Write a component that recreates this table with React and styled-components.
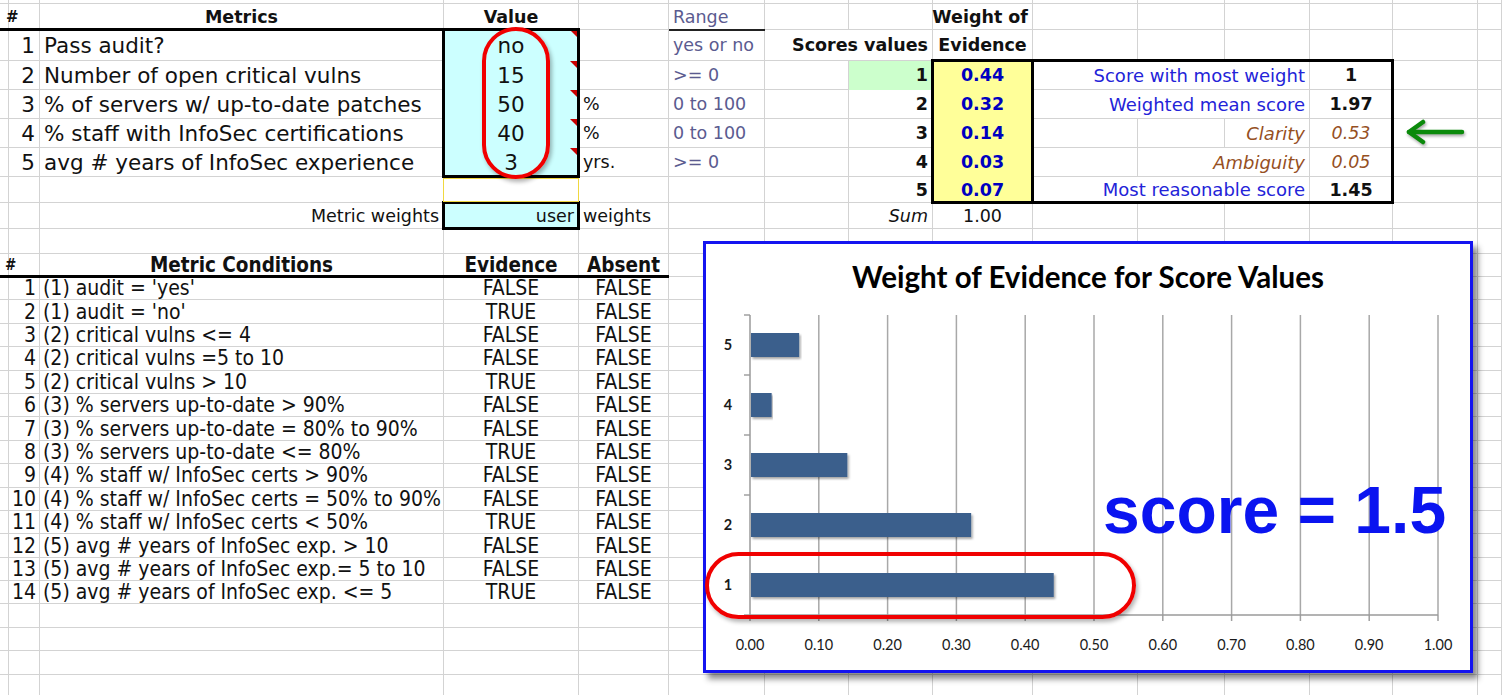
import React from "react";
import styled, { createGlobalStyle, css } from "styled-components";

const COLS = [2, 38, 404, 135, 90, 96, 84, 84, 100, 105, 87, 85, 83, 85, 24];
const ROWS = [4, 26, 31, 29, 29, 29, 29, 26, 26, 25, 23, ...Array(18).fill(23.4)];

const GRID = "#d3d3d3";
const CYAN = "#ccffff";
const YELLOW = "#ffff99";
const GREEN = "#ccffcc";
const RANGE = "#5b5b90";
const BLUE = "#2323d8";
const BROWN = "#96501f";

const GlobalStyle = createGlobalStyle`
  html, body {
    margin: 0;
    padding: 0;
    background: #fff;
    overflow: hidden;
  }
  body {
    font-family: "DejaVu Sans", Verdana, sans-serif;
    color: #111;
  }
`;

const Sheet = styled.div`
  position: relative;
  width: 1502px;
  height: 695px;
  overflow: hidden;
  display: grid;
  grid-template-columns: ${COLS.map((w) => w + "px").join(" ")};
  grid-template-rows: ${ROWS.map((h) => h + "px").join(" ")};
`;

const justify = { left: "flex-start", right: "flex-end", center: "center" };

const Cell = styled.div`
  grid-row: ${(p) => p.$row};
  grid-column: ${(p) => p.$col} / span ${(p) => p.$span || 1};
  position: relative;
  display: flex;
  align-items: center;
  justify-content: ${(p) => justify[p.$align || "left"]};
  box-sizing: border-box;
  padding: 0 4px;
  min-width: 0;
  border-right: 1px solid ${(p) => p.$bg || GRID};
  border-bottom: 1px solid ${(p) => p.$bg || GRID};
  background: ${(p) => p.$bg || "transparent"};
  font-size: ${(p) => p.$size || 17.5}px;
  font-weight: ${(p) => (p.$bold ? 700 : 400)};
  font-style: ${(p) => (p.$italic ? "italic" : "normal")};
  color: ${(p) => p.$color || "#111"};
  white-space: nowrap;
  ${(p) =>
    p.$cond &&
    css`
      font-family: "DejaVu Sans Condensed", "DejaVu Sans", sans-serif;
      font-stretch: condensed;
      padding: 0 3px;
    `}
  ${(p) =>
    p.$note &&
    css`
      &::after {
        content: "";
        position: absolute;
        top: 0;
        right: 0;
        border-left: 8px solid transparent;
        border-top: 8px solid #c80000;
      }
    `}
`;

const Frame = styled.div`
  grid-row: ${(p) => p.$rows};
  grid-column: ${(p) => p.$cols};
  margin: ${(p) => (p.$w === 1 ? "1px 0 1px -1px" : "-2px -1px -1px -2px")};
  border: ${(p) => p.$w || 3}px solid ${(p) => p.$color || "#000"};
  pointer-events: none;
  z-index: ${(p) => (p.$w === 1 ? 3 : 2)};
`;

const Rule = styled.div`
  grid-row: ${(p) => p.$row};
  grid-column: ${(p) => p.$cols};
  align-self: end;
  height: ${(p) => p.$w || 3}px;
  margin-bottom: -1px;
  background: ${(p) => p.$color || "#000"};
  z-index: 2;
`;

const ValuesOval = styled.div`
  position: absolute;
  left: 482px;
  top: 27px;
  width: 68px;
  height: 152px;
  box-sizing: border-box;
  border: 4px solid #f00000;
  border-radius: 34px;
  box-shadow: 2px 3px 4px rgba(0, 0, 0, 0.3);
  z-index: 6;
`;

const Chart = styled.div`
  position: absolute;
  left: 703px;
  top: 241px;
  width: 770px;
  height: 432px;
  box-sizing: border-box;
  border: 3px solid #1414f0;
  background: #fff;
  box-shadow: 5px 6px 6px rgba(0, 0, 0, 0.45);
  z-index: 5;
  display: flex;
  flex-direction: column;
`;

const ChartTitle = styled.div`
  height: 64px;
  display: flex;
  align-items: center;
  justify-content: center;
  font-family: Lato, "Open Sans", sans-serif;
  font-weight: 700;
  font-size: 29.5px;
  color: #000;
`;

const ScoreNote = styled.div`
  position: absolute;
  left: 397px;
  top: 233px;
  font-family: "Liberation Sans", Arial, sans-serif;
  font-weight: 700;
  font-size: 66px;
  line-height: 66px;
  color: #0a14f0;
  white-space: nowrap;
`;

const BarOval = styled.div`
  position: absolute;
  left: -1px;
  top: 308px;
  width: 431px;
  height: 67px;
  box-sizing: border-box;
  border: 4px solid #f00000;
  border-radius: 34px;
  box-shadow: 2px 3px 4px rgba(0, 0, 0, 0.3);
`;

const big = { size: 21.5 };
const hdr = { bold: true };
const rng = { color: RANGE };
const ev = { bold: true, color: "#0000c0", align: "center", bg: YELLOW };
const sc = { bold: true, align: "right" };
const val = { size: 21.5, align: "center", bg: CYAN, note: true };
const box = { color: BLUE, align: "right", size: 18 };

function LeftArrow() {
  return (
    <svg width="62" height="28" viewBox="0 0 62 28" style={{ filter: "drop-shadow(1px 2px 1.5px rgba(0,0,0,.35))" }}>
      <g fill="none" stroke="#0b8a0b" strokeWidth="4.5" strokeLinecap="round" strokeLinejoin="round">
        <line x1="5" y1="13" x2="58" y2="13" />
        <polyline points="19,3 5,13 19,23" />
      </g>
    </svg>
  );
}

const conditions = [
  ["(1) audit = 'yes'", "FALSE"],
  ["(1) audit = 'no'", "TRUE"],
  ["(2) critical vulns <= 4", "FALSE"],
  ["(2) critical vulns =5 to 10", "FALSE"],
  ["(2) critical vulns > 10", "TRUE"],
  ["(3) % servers up-to-date > 90%", "FALSE"],
  ["(3) % servers up-to-date = 80% to 90%", "FALSE"],
  ["(3) % servers up-to-date <= 80%", "TRUE"],
  ["(4) % staff w/ InfoSec certs > 90%", "FALSE"],
  ["(4) % staff w/ InfoSec certs = 50% to 90%", "FALSE"],
  ["(4) % staff w/ InfoSec certs < 50%", "TRUE"],
  ["(5) avg # years of InfoSec exp. > 10", "FALSE"],
  ["(5) avg # years of InfoSec exp.= 5 to 10", "FALSE"],
  ["(5) avg # years of InfoSec exp. <= 5", "TRUE"],
];

const low = { cond: true, size: 21 };

const sheetRows = {
  2: [
    { c: 2, text: "#", ...hdr, size: 15 },
    { c: 3, text: "Metrics", ...hdr, align: "center" },
    { c: 4, text: "Value", ...hdr, align: "center" },
    { c: 6, text: "Range", ...rng },
    { c: 9, text: "Weight of", ...hdr, align: "right" },
  ],
  3: [
    { c: 2, text: "1", ...big, align: "right" },
    { c: 3, text: "Pass audit?", ...big },
    { c: 4, text: "no", ...val },
    { c: 6, text: "yes or no", ...rng },
    { c: 7, span: 2, text: "Scores values", ...sc },
    { c: 9, text: "Evidence", ...hdr, align: "center" },
  ],
  4: [
    { c: 2, text: "2", ...big, align: "right" },
    { c: 3, text: "Number of open critical vulns", ...big },
    { c: 4, text: "15", ...val },
    { c: 6, text: ">= 0", ...rng },
    { c: 8, text: "1", ...sc, bg: GREEN },
    { c: 9, text: "0.44", ...ev },
    { c: 10, span: 3, text: "Score with most weight", ...box },
    { c: 13, text: "1", bold: true, align: "center" },
  ],
  5: [
    { c: 2, text: "3", ...big, align: "right" },
    { c: 3, text: "% of servers w/ up-to-date patches", ...big },
    { c: 4, text: "50", ...val },
    { c: 5, text: "%" },
    { c: 6, text: "0 to 100", ...rng },
    { c: 8, text: "2", ...sc },
    { c: 9, text: "0.32", ...ev },
    { c: 10, span: 3, text: "Weighted mean score", ...box },
    { c: 13, text: "1.97", bold: true, align: "center" },
  ],
  6: [
    { c: 2, text: "4", ...big, align: "right" },
    { c: 3, text: "% staff with InfoSec certifications", ...big },
    { c: 4, text: "40", ...val },
    { c: 5, text: "%" },
    { c: 6, text: "0 to 100", ...rng },
    { c: 8, text: "3", ...sc },
    { c: 9, text: "0.14", ...ev },
    { c: 12, text: "Clarity", italic: true, color: BROWN, align: "right", size: 18 },
    { c: 13, text: "0.53", italic: true, color: BROWN, align: "center" },
    { c: 14, text: <LeftArrow />, align: "center" },
  ],
  7: [
    { c: 2, text: "5", ...big, align: "right" },
    { c: 3, text: "avg # years of InfoSec experience", ...big },
    { c: 4, text: "3", ...val },
    { c: 5, text: "yrs." },
    { c: 6, text: ">= 0", ...rng },
    { c: 8, text: "4", ...sc },
    { c: 9, text: "0.03", ...ev },
    { c: 11, span: 2, text: "Ambiguity", italic: true, color: BROWN, align: "right", size: 18 },
    { c: 13, text: "0.05", italic: true, color: BROWN, align: "center" },
  ],
  8: [
    { c: 8, text: "5", ...sc },
    { c: 9, text: "0.07", ...ev },
    { c: 10, span: 3, text: "Most reasonable score", ...box },
    { c: 13, text: "1.45", bold: true, align: "center" },
  ],
  9: [
    { c: 3, text: "Metric weights", align: "right" },
    { c: 4, text: "user", align: "right", bg: CYAN },
    { c: 5, text: "weights" },
    { c: 8, text: "Sum", italic: true, align: "right" },
    { c: 9, text: "1.00", align: "center" },
  ],
  11: [
    { c: 2, text: "#", ...low, bold: true, size: 15 },
    { c: 3, text: "Metric Conditions", ...low, bold: true, size: 20.5, align: "center" },
    { c: 4, text: "Evidence", ...low, bold: true, size: 20.5, align: "center" },
    { c: 5, text: "Absent", ...low, bold: true, size: 20.5, align: "center" },
  ],
};

conditions.forEach(([label, evidence], i) => {
  sheetRows[12 + i] = [
    { c: 2, text: String(i + 1), ...low, align: "right" },
    { c: 3, text: label, ...low },
    { c: 4, text: evidence, ...low, align: "center" },
    { c: 5, text: "FALSE", ...low, align: "center" },
  ];
});

function renderRow(row) {
  const specs = sheetRows[row] || [];
  const byCol = {};
  specs.forEach((s) => (byCol[s.c] = s));
  const cells = [];
  let c = 1;
  while (c <= COLS.length) {
    const s = byCol[c];
    if (s) {
      cells.push(
        <Cell
          key={`${row}-${c}`}
          $row={row}
          $col={c}
          $span={s.span}
          $align={s.align}
          $bold={s.bold}
          $italic={s.italic}
          $size={s.size}
          $color={s.color}
          $bg={s.bg}
          $note={s.note}
          $cond={s.cond}
        >
          {s.text}
        </Cell>
      );
      c += s.span || 1;
    } else {
      cells.push(<Cell key={`${row}-${c}`} $row={row} $col={c} />);
      c += 1;
    }
  }
  return cells;
}

const weights = [
  { label: "5", value: 0.07 },
  { label: "4", value: 0.03 },
  { label: "3", value: 0.14 },
  { label: "2", value: 0.32 },
  { label: "1", value: 0.44 },
];

function EvidenceChart() {
  const x0 = 44;
  const step = 68.8;
  const top = 7;
  const band = 60;
  const bottom = top + band * weights.length;
  const ticks = Array.from({ length: 11 }, (_, i) => i);
  return (
    <svg width="764" height="362" viewBox="0 0 764 362">
      <defs>
        <filter id="barShadow" x="-5%" y="-20%" width="110%" height="160%">
          <feDropShadow dx="1.5" dy="2" stdDeviation="1.2" floodColor="#000" floodOpacity="0.35" />
        </filter>
      </defs>
      {ticks.slice(1).map((i) => (
        <line key={i} x1={x0 + i * step} y1={top} x2={x0 + i * step} y2={bottom} stroke="#a8a8a8" strokeWidth="1.5" />
      ))}
      {ticks.map((i) => (
        <line key={"t" + i} x1={x0 + i * step} y1={bottom} x2={x0 + i * step} y2={bottom + 6} stroke="#a0a0a0" strokeWidth="1.5" />
      ))}
      {Array.from({ length: weights.length + 1 }, (_, i) => (
        <line key={"l" + i} x1={x0 - 6} y1={top + i * band} x2={x0} y2={top + i * band} stroke="#a0a0a0" strokeWidth="1.5" />
      ))}
      <line x1={x0} y1={top} x2={x0} y2={bottom} stroke="#9a9a9a" strokeWidth="1.5" />
      <line x1={x0} y1={bottom} x2={x0 + 10 * step} y2={bottom} stroke="#9a9a9a" strokeWidth="1.5" />
      {weights.map((w, i) => {
        const cy = top + band / 2 + i * band;
        return (
          <g key={w.label}>
            <rect x={x0 + 1} y={cy - 12} width={w.value * 10 * step} height="24" fill="#3a5e8c" filter="url(#barShadow)" />
            <text x="22" y={cy + 5} textAnchor="middle" fontFamily="Lato, 'Open Sans', sans-serif" fontWeight="700" fontSize="14.5" fill="#1a1a1a">
              {w.label}
            </text>
          </g>
        );
      })}
      {ticks.map((i) => (
        <text key={"x" + i} x={x0 + i * step} y={bottom + 35} textAnchor="middle" fontFamily="Lato, 'Open Sans', sans-serif" fontSize="14.5" fill="#1a1a1a">
          {(i / 10).toFixed(2)}
        </text>
      ))}
    </svg>
  );
}

export default function App() {
  return (
    <>
      <GlobalStyle />
      <Sheet>
        {ROWS.map((_, r) => renderRow(r + 1))}

        <Rule $row={2} $cols="1 / span 4" />
        <Rule $row={2} $cols="6 / span 1" $w={2} $color="#222" />
        <Frame $rows="3 / span 5" $cols="4 / span 1" />
        <Frame $rows="8 / span 1" $cols="4 / span 1" $w={1} $color="#f0d840" />
        <Frame $rows="9 / span 1" $cols="4 / span 1" />
        <Frame $rows="4 / span 5" $cols="9 / span 1" />
        <Frame $rows="4 / span 5" $cols="10 / span 4" />
        <Rule $row={11} $cols="1 / span 5" />

        <ValuesOval />

        <Chart>
          <ChartTitle>Weight of Evidence for Score Values</ChartTitle>
          <EvidenceChart />
          <ScoreNote>score = 1.5</ScoreNote>
          <BarOval />
        </Chart>
      </Sheet>
    </>
  );
}
